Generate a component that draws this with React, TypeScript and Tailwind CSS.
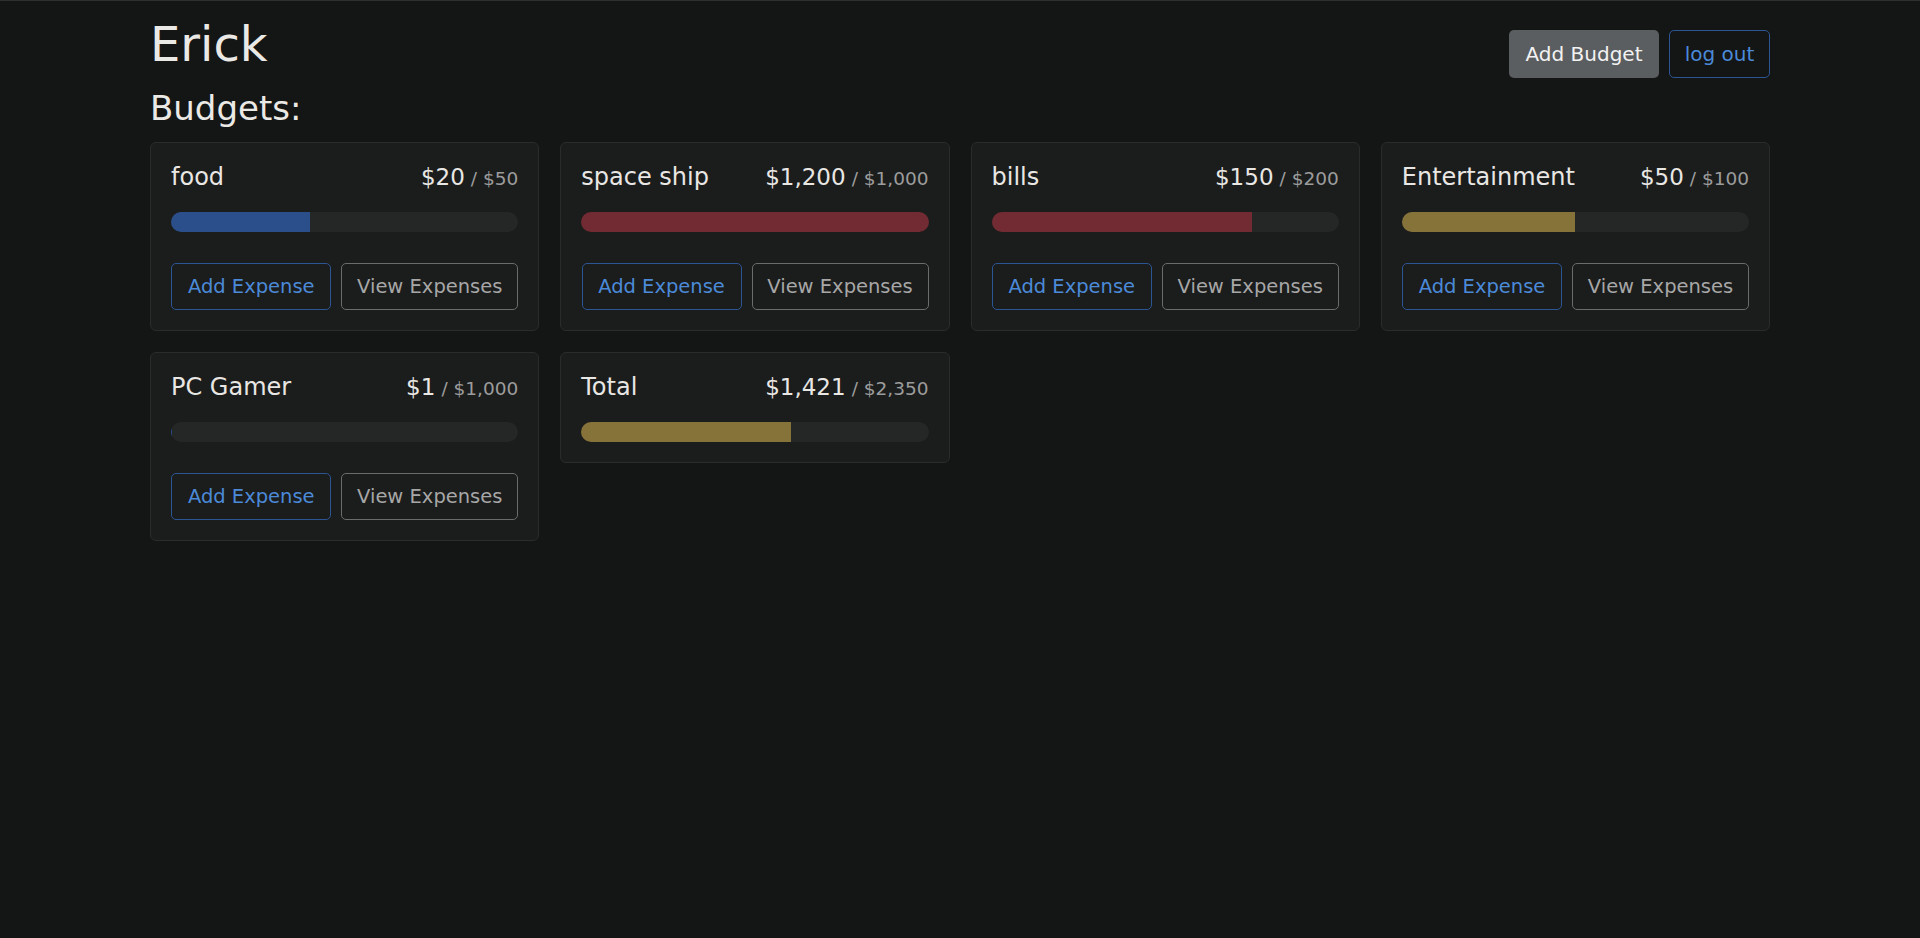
const budgets = [
  { name: 'food', amount: 20, max: 50 },
  { name: 'space ship', amount: 1200, max: 1000 },
  { name: 'bills', amount: 150, max: 200 },
  { name: 'Entertainment', amount: 50, max: 100 },
  { name: 'PC Gamer', amount: 1, max: 1000 },
];

const fmt = (n: number) => '$' + n.toLocaleString('en-US');

function barColor(ratio: number) {
  if (ratio < 0.5) return 'bg-[#2b4f8b]';
  if (ratio < 0.75) return 'bg-[#86733a]';
  return 'bg-[#732b33]';
}

interface CardProps {
  name: string;
  amount: number;
  max: number;
  hideButtons?: boolean;
}

function BudgetCard({ name, amount, max, hideButtons }: CardProps) {
  const ratio = amount / max;
  return (
    <div className="rounded-[6px] border border-[#2a2b2b] bg-[#1b1c1c] p-[20px]">
      <div className="flex h-[29px] items-baseline justify-between leading-[29px] text-[#e9e7e4]">
        <div className="text-[24px]">{name}</div>
        <div className="flex items-baseline">
          <span className="text-[23px]">{fmt(amount)}</span>
          <span className="ml-[6px] text-[18.5px] text-[#9c9c9c]">/ {fmt(max)}</span>
        </div>
      </div>
      <div className="mt-[20px] h-[20px] w-full overflow-hidden rounded-full bg-[#252626]">
        <div className={`h-full ${barColor(ratio)}`} style={{ width: `${Math.min(ratio, 1) * 100}%` }} />
      </div>
      {!hideButtons && (
        <div className="mt-[31px] flex justify-end gap-[10px]">
          <button className="h-[47px] w-[160px] rounded-[5px] border border-[#2c5593] text-[19.5px] text-[#4b8ad8]">
            Add Expense
          </button>
          <button className="h-[47px] w-[177px] rounded-[5px] border border-[#6a6b6b] text-[19.5px] text-[#a7a7a7]">
            View Expenses
          </button>
        </div>
      )}
    </div>
  );
}

export default function App() {
  const total = budgets.reduce((s, b) => s + b.amount, 0);
  const totalMax = budgets.reduce((s, b) => s + b.max, 0);
  return (
    <div className="min-h-[938px] border-t border-[#2e2f2f] bg-[#141515] font-['DejaVu_Sans',sans-serif]">
      <div className="mx-auto w-[1620px]">
        <div className="flex items-start justify-between pt-[14px]">
          <h1 className="text-[48px] leading-[58px] text-[#ebe9e6]">Erick</h1>
          <div className="mt-[15px] flex gap-[10px]">
            <button className="h-[48px] w-[150px] rounded-[5px] bg-[#5b5e60] text-[20px] text-[#f2f2f2]">
              Add Budget
            </button>
            <button className="h-[48px] w-[101px] rounded-[5px] border border-[#2c5593] text-[20px] text-[#4b8ad8]">
              log out
            </button>
          </div>
        </div>
        <h2 className="mt-[10px] text-[34px] leading-[40px] text-[#ebe9e6]">Budgets:</h2>
        <div className="mt-[14px] grid grid-cols-4 items-start gap-[21px]">
          {budgets.map((b) => (
            <BudgetCard key={b.name} {...b} />
          ))}
          <BudgetCard name="Total" amount={total} max={totalMax} hideButtons />
        </div>
      </div>
    </div>
  );
}
